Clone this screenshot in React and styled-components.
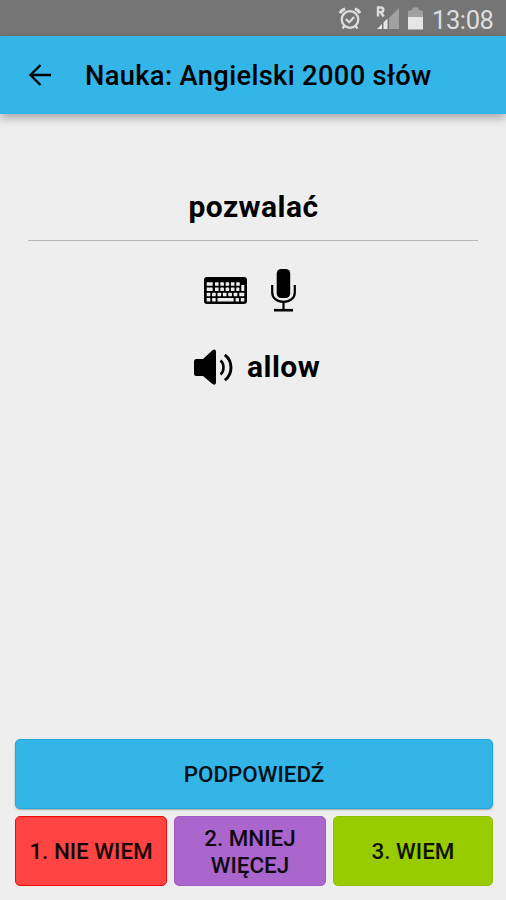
import styled, { createGlobalStyle } from 'styled-components'

const GlobalStyle = createGlobalStyle`
  * {
    box-sizing: border-box;
  }
  body {
    margin: 0;
    background-color: #eeeeee;
    font-family: Roboto, 'Liberation Sans', sans-serif;
    color: #000;
  }
`

function App() {
  return (
    <Screen>
      <GlobalStyle />

      <StatusBar>
        <AlarmIcon />
        <SignalIcon />
        <BatteryIcon />
        <Clock>13:08</Clock>
      </StatusBar>

      <Toolbar>
        <BackButton aria-label="Wstecz">
          <BackIcon />
        </BackButton>
        <Title>Nauka: Angielski 2000 słów</Title>
      </Toolbar>

      <Content>
        <Question>
          <Word>pozwalać</Word>
        </Question>
        <InputModes>
          <KeyboardIcon />
          <MicIcon />
        </InputModes>
        <Answer>
          <SpeakerIcon />
          <Word>allow</Word>
        </Answer>
      </Content>

      <Actions>
        <ActionButton $bg="#33b5e8" $edge="#1ea9dd" $shadow>
          <Label>PODPOWIEDŹ</Label>
        </ActionButton>
        <Answers>
          <ActionButton $bg="#ff4444" $edge="#f90606">
            <Label>1. NIE WIEM</Label>
          </ActionButton>
          <ActionButton $bg="#aa66cc" $edge="#a05bc6">
            <Label>2. MNIEJ<br />WIĘCEJ</Label>
          </ActionButton>
          <ActionButton $bg="#99cc00" $edge="#8fc000">
            <Label>3. WIEM</Label>
          </ActionButton>
        </Answers>
      </Actions>
    </Screen>
  )
}

const AlarmIcon = () => (
  <svg width="22" height="23" viewBox="0 0 22 23" fill="none" stroke="#dedede">
    <circle cx="11" cy="12.5" r="8.3" strokeWidth="2.3" />
    <path d="M6.8 12l3.4 3.2 5-5.2" strokeWidth="2.2" />
    <path d="M1.2 6.2q1.2-3.3 5-4.3M20.8 6.2q-1.2-3.3-5-4.3" strokeWidth="3" />
    <path d="M5.5 19l-2 2.5M16.5 19l2 2.5" strokeWidth="2.2" />
  </svg>
)

const SignalIcon = () => (
  <svg width="24" height="24" viewBox="0 0 24 24">
    <path d="M23 2v21H13V12z" fill="#a1a1a1" />
    <path d="M11.500 12.500v10.500H7.500v-6.500zM6 18v5H1z" fill="#e6e6e6" />
    <path d="M2 10.500V1.500h2.800q2.500 0 2.500 2.300T4.800 6.100H2M4.700 6l3 4.500" fill="none" stroke="#dcdcdc" strokeWidth="2.400" />
  </svg>
)

const BatteryIcon = () => (
  <svg width="15" height="23" viewBox="0 0 15 23">
    <path d="M0 10V4l4-1 1-2.500h5L11 3l4 1v6z" fill="#a1a1a1" />
    <path d="M0 10h15v12.500H0z" fill="#e6e6e6" />
  </svg>
)

const BackIcon = () => (
  <svg width="24" height="24" viewBox="0 0 24 24" fill="none" stroke="#000" strokeWidth="2.3">
    <path d="M23 12H2.500M12.500 2L2.500 12l10 10" />
  </svg>
)

// key rows as [x, y, width, height]
const keys = [
  [2.700, 5.200, 6, 3.500], [11, 5.200, 3.600, 3.500], [16.300, 5.200, 3.600, 3.500], [21.600, 5.200, 3.600, 3.500], [26.900, 5.200, 3.600, 3.500], [32.200, 5.200, 3.600, 3.500],
  [2.700, 10.400, 6, 3.500], [11, 10.400, 3.600, 3.500], [16.300, 10.400, 3.600, 3.500], [21.600, 10.400, 3.600, 3.500], [26.900, 10.400, 3.600, 3.500], [32.200, 10.400, 3.200, 3.500],
  [37.300, 8, 3, 6],
  [2.700, 15.700, 3.600, 3.500], [8.100, 15.700, 3.600, 3.500], [13.500, 15.700, 3.600, 3.500], [18.900, 15.700, 3.600, 3.500], [24.300, 15.700, 3.600, 3.500], [29.700, 15.700, 3.600, 3.500], [35.300, 15.700, 5, 3.500],
  [2.700, 21, 3.600, 3.500], [8.100, 21, 3.600, 3.500], [13.500, 21, 16.200, 3.500], [31.600, 21, 3.400, 3.500], [36.800, 21, 3.500, 3.500],
]

const KeyboardIcon = () => (
  <svg width="43" height="27" viewBox="0 0 43 27">
    <rect width="43" height="27" rx="3" fill="#000" />
    {keys.map(([x, y, w, h]) => (
      <rect key={`${x}-${y}`} x={x} y={y} width={w} height={h} rx="0.5" fill="#eee" />
    ))}
  </svg>
)

const MicIcon = () => (
  <svg width="25" height="43" viewBox="0 0 25 43">
    <rect x="5.700" y="0" width="13.500" height="29" rx="4.500" fill="#000" />
    <path d="M1.200 16v7.500c0 5.500 4.500 9.300 11.300 9.300s11.300-3.800 11.300-9.300V16M12.500 33v8" fill="none" stroke="#000" strokeWidth="2.200" />
    <path d="M3 41.200h19" stroke="#000" strokeWidth="2.600" />
  </svg>
)

const SpeakerIcon = () => (
  <svg width="40" height="37" viewBox="0 0 40 37">
    <path d="M3.500 10h6.500L19.500 1.200Q23 -.8 23 3v30q0 4.200-3.500 2L10 27H3.500q-2.500 0-2.500-2.500v-12Q1 10 3.500 10z" fill="#000" />
    <path d="M27.500 11.500q3 2.200 3 7t-3 7" fill="none" stroke="#000" strokeWidth="2.600" />
    <path d="M31.800 5.800q6.200 4.700 6.200 12.700t-6.200 12.700" fill="none" stroke="#000" strokeWidth="2.900" />
  </svg>
)

const Screen = styled.div`
  display: flex;
  flex-direction: column;
  width: 506px;
  height: 900px;
  background-color: #eeeeee;
  overflow: hidden;
`

const StatusBar = styled.header`
  display: flex;
  align-items: center;
  justify-content: flex-end;
  height: 36px;
  padding: 0 12px 0 0;
  background-color: #757575;

  svg:nth-child(1) {
    margin-right: 15px;
  }
  svg:nth-child(2) {
    margin-right: 8px;
  }
`

const Clock = styled.span`
  width: 62px;
  margin-left: 9px;
  font-size: 25.5px;
  line-height: 34px;
  letter-spacing: -0.4px;
  white-space: nowrap;
  padding-top: 3px;
  color: #dedede;
`

const Toolbar = styled.div`
  display: flex;
  align-items: center;
  height: 78px;
  padding-left: 28px;
  background-color: #33b5e8;
  box-shadow: 0 4px 9px rgba(0, 0, 0, 0.3);
`

const BackButton = styled.button`
  display: flex;
  padding: 0;
  border: none;
  background: none;
`

const Title = styled.h1`
  margin: 2px 0 0 33px;
  font-size: 27.3px;
  font-weight: 500;
  line-height: 32px;
  letter-spacing: 0.34px;
  white-space: nowrap;
`

const Content = styled.main`
  display: flex;
  flex: 1;
  flex-direction: column;
  padding: 76px 28px 0;
`

const Question = styled.div`
  display: flex;
  justify-content: center;
  height: 51px;
  padding-left: 1px;
  border-bottom: 1px solid #b9b9b9;
`

const Word = styled.span`
  font-size: 30px;
  font-weight: 700;
  line-height: 34px;
  letter-spacing: 0.45px;
`

const InputModes = styled.div`
  display: flex;
  align-items: center;
  gap: 24px;
  height: 43px;
  margin: 28px 0 0 176px;
`

const Answer = styled.div`
  display: flex;
  align-items: center;
  gap: 14px;
  margin: 37px 0 0 165px;

  ${Word} {
    margin-bottom: 2px;
  }
`

const Actions = styled.footer`
  display: flex;
  flex-direction: column;
  gap: 7px;
  padding: 0 13px 14px 15px;
`

const Answers = styled.div`
  display: grid;
  grid-template-columns: 152px 152px 1fr;
  gap: 7px;
`

const ActionButton = styled.button`
  display: flex;
  align-items: center;
  justify-content: center;
  height: 70px;
  padding: 1px 0 0;
  border: 1px solid ${({ $edge }) => $edge};
  border-radius: 5px;
  background-color: ${({ $bg }) => $bg};
  box-shadow: ${({ $shadow }) => ($shadow ? '0 1px 2px rgba(0, 0, 0, 0.3)' : 'none')};
  font-family: inherit;
  font-size: 22.4px;
  font-weight: 500;
  line-height: 27px;
  color: #000;
`

const Label = styled.span`
  text-align: center;
  white-space: nowrap;
  opacity: 0.9;
`

export default App
